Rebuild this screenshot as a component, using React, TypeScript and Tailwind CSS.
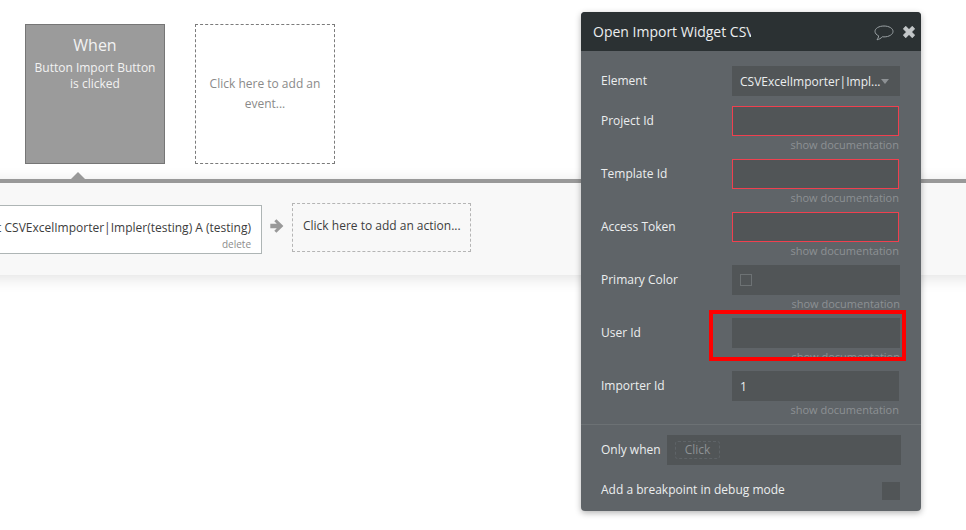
import React from "react";

function Row({ label, invalid, value, checkbox, shift }: { label: string; invalid?: boolean; value?: string; checkbox?: boolean; shift?: boolean }) {
  return (
    <div className="h-[53px] flex flex-col">
      <div className="flex items-start h-[30px]">
        <div className="w-[151px] pl-[20px] text-[12px] leading-[18px] pt-[6px] text-[#eceeef]">{label}</div>
        <div
          className={`${shift ? "w-[168px]" : "w-[167px]"} h-[30px] bg-[#515557] flex items-center text-[12px] text-[#eceeef] ${invalid ? "border border-[#f0404f]" : ""}`}
        >
          {checkbox ? <div className="ml-[8px] w-[12px] h-[12px] border border-[#6d7274]" /> : null}
          {value ? <span className="ml-[8px] mt-[1px]">{value}</span> : null}
        </div>
      </div>
      <div className={`text-right text-[11px] leading-[16px] text-[#8d9194] pt-[1px] ${shift ? "pr-[21px]" : "pr-[22px]"}`}>show documentation</div>
    </div>
  );
}

export default function App() {
  return (
    <div className="relative w-[966px] h-[530px] overflow-hidden bg-white font-['Open_Sans',sans-serif]">
      <div className="flex gap-[30px] pl-[25px] pt-[24px]">
        <div className="w-[140px] h-[140px] bg-[#9b9b9b] border border-[#767676] text-center text-[#f2f2f2] pt-[9px]">
          <div className="text-[16px] leading-[22px]">When</div>
          <div className="text-[12px] leading-[16px] mt-[4px] px-[6px]">Button Import Button is clicked</div>
        </div>
        <div className="w-[140px] h-[140px] border border-dashed border-[#7b7b7b] text-center text-[12px] leading-[20px] text-[#8a8a8a] flex items-center justify-center px-[10px]">
          <span>Click here to add an event...</span>
        </div>
      </div>

      <div className="relative mt-[15px] mx-[-30px] h-[96px] bg-[#f8f8f8] border-t-[4px] border-[#999999] shadow-[0_3px_15px_rgba(0,0,0,0.12)]">
        <div className="absolute left-[101px] top-[-11px] w-0 h-0 border-l-[7px] border-r-[7px] border-b-[7px] border-l-transparent border-r-transparent border-b-[#999999]" />
        <div className="flex items-start pt-[20px]">
          <div className="ml-[10px] w-[282px] h-[49px] mt-[2px] border border-[#aeb5b5] bg-white relative overflow-hidden shrink-0">
            <div className="absolute right-[10px] top-[13px] whitespace-nowrap text-[12px] leading-[18px] text-[#3d3d3d]">Open Import Widget CSVExcelImporter|Impler(testing) A (testing)</div>
            <div className="absolute right-[10px] top-[31px] text-[10px] leading-[14px] text-[#8c8c8c]">delete</div>
          </div>
          <svg className="ml-[8px] mt-[16px] shrink-0" width="14" height="14" viewBox="0 0 14 14">
            <path d="M0.3 4.8H6.8L4.3 2.3L6.4 0.2L13.4 7L6.4 13.8L4.3 11.7L6.8 9.2H0.3Z" fill="#999999" />
          </svg>
          <div className="ml-[8px] w-[179px] h-[49px] border border-dashed border-[#b5b5b5] text-[12px] leading-[18px] text-[#3d3d3d] pl-[10px] pt-[13px] shrink-0">Click here to add an action...</div>
        </div>
      </div>

      <div className="absolute left-[581px] top-[12px] w-[340px] h-[499px] rounded-[4px] overflow-hidden bg-[#5f6468] shadow-[0_2px_6px_rgba(0,0,0,0.3)]">
        <div className="h-[39px] bg-[#2b3133] flex items-center relative">
          <div className="ml-[12px] w-[158px] overflow-hidden whitespace-nowrap text-[14px] leading-[20px] text-[#eceeef]">Open Import Widget CSV Excel</div>
          <svg className="absolute left-[293px] top-[13px]" width="20" height="17" viewBox="0 0 20 17" fill="none">
            <path d="M10 1C5 1 1 3.3 1 6.4c0 1.9 1.5 3.5 3.7 4.5-.2 1.6-.9 3-1.7 3.9 2-.4 4-1.5 5.3-3 .6 .1 1.1 .1 1.7 .1 5 0 9-2.4 9-5.5S15 1 10 1Z" stroke="#9aa1a4" strokeWidth="1" />
          </svg>
          <svg className="absolute left-[321px] top-[13px]" width="14" height="14" viewBox="0 0 13 13">
            <path d="M1.5 3.5L3.5 1.5L6.5 4.5L9.5 1.5L11.5 3.5L8.5 6.5L11.5 9.5L9.5 11.5L6.5 8.5L3.5 11.5L1.5 9.5L4.5 6.5Z" fill="#c3c7c9" stroke="#c3c7c9" strokeWidth="1" strokeLinejoin="round" />
          </svg>
        </div>

        <div className="pt-[15px]">
          <div className="flex items-start h-[40px]">
            <div className="w-[151px] pl-[20px] text-[12px] leading-[18px] pt-[6px] text-[#eceeef]">Element</div>
            <div className="w-[168px] h-[30px] bg-[#515557] flex items-center text-[12px] text-[#eceeef] pl-[8px] relative">
              <span className="whitespace-nowrap mt-[1px]">CSVExcelImporter|Impl...</span>
              <div className="absolute left-[149px] top-[13px] w-0 h-0 border-l-[4px] border-r-[4px] border-t-[5px] border-l-transparent border-r-transparent border-t-[#8d9194]" />
            </div>
          </div>
          <Row label="Project Id" invalid />
          <Row label="Template Id" invalid />
          <Row label="Access Token" invalid />
          <Row label="Primary Color" checkbox shift />
          <Row label="User Id" shift />
          <Row label="Importer Id" value="1" />
        </div>

        <div className="border-t border-[#6c7174] pt-[10px]">
          <div className="flex items-center h-[30px]">
            <div className="w-[86px] pl-[20px] text-[12px] text-[#eceeef] whitespace-nowrap">Only when</div>
            <div className="w-[234px] h-[30px] bg-[#515557] flex items-center pl-[8px]">
              <div className="w-[45px] h-[18px] border border-dashed border-[#5f6468] rounded-[3px] text-center text-[12px] leading-[16px] text-[#8d9194]">Click</div>
            </div>
          </div>
          <div className="flex items-center justify-between h-[18px] mt-[17px] pl-[20px] pr-[21px]">
            <span className="text-[12px] text-[#eceeef] mt-[-2px]">Add a breakpoint in debug mode</span>
            <div className="w-[18px] h-[18px] bg-[#515557]" />
          </div>
        </div>
      </div>

      <div className="absolute left-[709px] top-[310px] w-[197px] h-[51px] border-[4px] border-[#ff0000]" />
    </div>
  );
}
